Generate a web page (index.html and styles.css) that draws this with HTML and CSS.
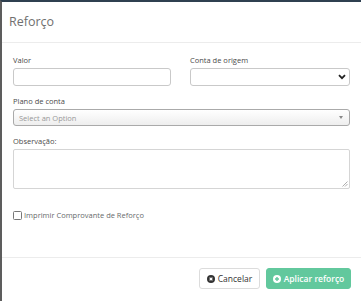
FILE: index.html
```html
<!DOCTYPE html>
<html lang="pt">
<head>
  <meta charset="UTF-8">
  <meta name="viewport" content="width=device-width, initial-scale=1.0">
  <title>Reforço</title>
  <link rel="stylesheet" href="styles.css">
</head>
<body>
  <div class="modal">
    <div class="modal-header">
      <h4 class="modal-title">Reforço</h4>
    </div>

    <div class="modal-body">
      <div class="row">
        <div class="field">
          <label>Valor</label>
          <input type="text" class="input">
        </div>
        <div class="field">
          <label>Conta de origem</label>
          <div class="input select">
            <svg class="chevron" width="8" height="6" viewBox="0 0 8 6">
              <path d="M1 1.2 L4 4.2 L7 1.2" fill="none" stroke="#222" stroke-width="1.8"/>
            </svg>
          </div>
        </div>
      </div>

      <div class="field">
        <label>Plano de conta</label>
        <div class="select2">
          <span class="placeholder">Select an Option</span>
          <span class="arrow"></span>
        </div>
      </div>

      <div class="field">
        <label>Observação:</label>
        <div class="textarea">
          <svg class="grip" width="6" height="6" viewBox="0 0 6 6">
            <path d="M5.5 0.5 L0.5 5.5 M5.5 3 L3 5.5" stroke="#999" stroke-width="0.8"/>
          </svg>
        </div>
      </div>

      <label class="check">
        <span class="box"></span>
        Imprimir Comprovante de Reforço
      </label>
    </div>

    <div class="modal-footer">
      <button class="btn btn-white">
        <svg width="8" height="8" viewBox="0 0 8 8">
          <circle cx="4" cy="4" r="4" fill="#333"/>
          <path d="M2.6 2.6 L5.4 5.4 M5.4 2.6 L2.6 5.4" stroke="#fff" stroke-width="1.2"/>
        </svg>
        Cancelar
      </button>
      <button class="btn btn-primary">
        <svg width="8" height="8" viewBox="0 0 8 8">
          <circle cx="4" cy="4" r="4" fill="#fff"/>
          <path d="M4 2 L4 6 M2 4 L6 4" stroke="#62c89d" stroke-width="1.4"/>
        </svg>
        Aplicar reforço
      </button>
    </div>
  </div>
</body>
</html>
```

FILE: styles.css
```css
body {
  margin: 0;
  font-family: 'Open Sans', sans-serif;
  color: #676a6c;
  background: #fff;
}
.modal {
  height: 301px;
  box-sizing: border-box;
  border-top: 2px solid #2f4050;
  border-left: 2px solid #5d5d5d;
  background: #fff;
}
.modal-header {
  height: 41px;
  box-sizing: border-box;
  padding: 10px 7px 0;
  border-bottom: 1px solid #ececec;
}
.modal-title {
  margin: 0;
  font-size: 12.5px;
  font-weight: 400;
  line-height: 20px;
  color: #707070;
}
.modal-body {
  height: 214px;
  box-sizing: border-box;
  padding: 12px 10px 0 11px;
}
.row {
  display: grid;
  grid-template-columns: 158px 160px;
  gap: 19px;
}
.field {
  margin-bottom: 10px;
}
.field label {
  display: block;
  font-size: 7.5px;
  font-weight: 400;
  line-height: 11px;
  margin-bottom: 2px;
  color: #4a4a4a;
}
.input {
  display: block;
  width: 100%;
  height: 18px;
  box-sizing: border-box;
  margin: 0;
  border: 1px solid #c9c9c9;
  border-radius: 3px;
  background: #fff;
  font-family: inherit;
}
.select {
  display: flex;
  align-items: center;
  justify-content: flex-end;
  padding-right: 3px;
}
.select2 {
  display: flex;
  align-items: center;
  justify-content: space-between;
  height: 17px;
  box-sizing: border-box;
  padding: 0 6px 0 5px;
  margin-right: 1px;
  border: 1px solid #aaa;
  border-radius: 3px;
  background: linear-gradient(to bottom, #fff 0%, #eee 100%);
}
.placeholder {
  font-size: 7.5px;
  color: #999;
}
.arrow {
  width: 0;
  height: 0;
  border-left: 2.5px solid transparent;
  border-right: 2.5px solid transparent;
  border-top: 3px solid #888;
}
.textarea {
  height: 40px;
  box-sizing: border-box;
  margin-right: 1px;
  border: 1px solid #d5d5d5;
  border-radius: 2px;
  display: flex;
  align-items: flex-end;
  justify-content: flex-end;
  padding: 1px;
}
.check {
  display: flex;
  align-items: center;
  gap: 2px;
  margin-top: 21px;
  font-size: 7.5px;
  color: #676a6c;
}
.box {
  width: 7px;
  height: 7px;
  border: 1px solid #777;
  border-radius: 1.5px;
  background: #fff;
}
.modal-footer {
  display: flex;
  justify-content: flex-end;
  gap: 6px;
  padding: 10px 10px 0 0;
  border-top: 1px solid #ececec;
}
.btn {
  display: flex;
  align-items: center;
  justify-content: center;
  gap: 3px;
  height: 21px;
  box-sizing: border-box;
  padding: 0;
  border-radius: 3px;
  font-family: inherit;
  font-size: 8.5px;
  white-space: nowrap;
  cursor: pointer;
}
.btn-white {
  width: 61px;
  border: 1px solid #dcdcdc;
  background: #fff;
  color: #333;
}
.btn-primary {
  width: 85px;
  border: 1px solid #62c89d;
  background: #62c89d;
  color: #fff;
  font-weight: 600;
}
```
